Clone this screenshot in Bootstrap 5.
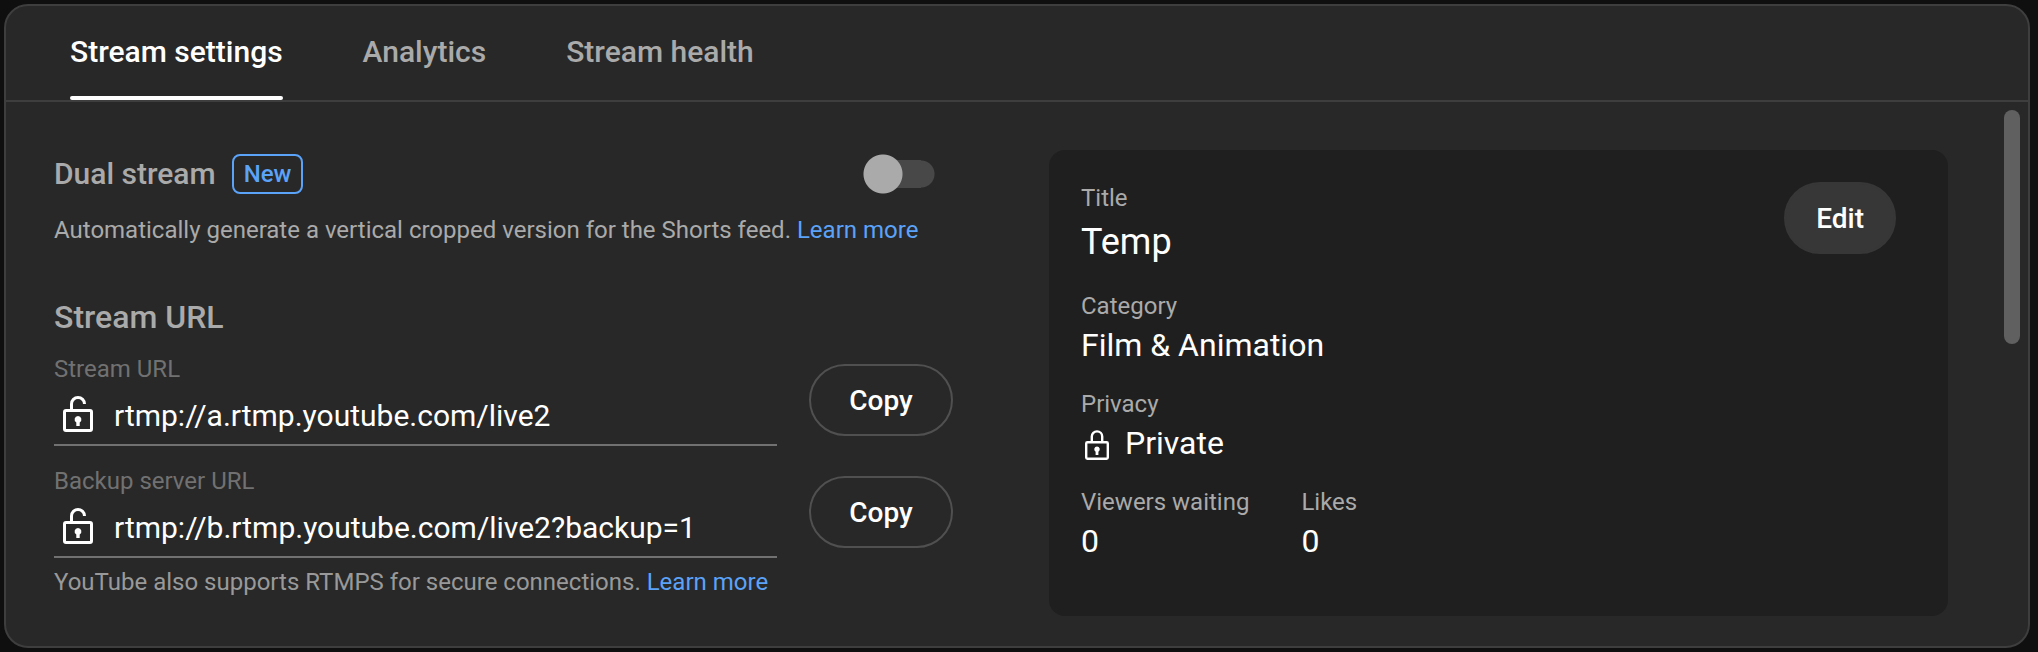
<!DOCTYPE html>
<html lang="en" data-bs-theme="dark">
<head>
<meta charset="utf-8">
<meta name="viewport" content="width=device-width, initial-scale=1">
<title>Stream settings</title>
<link rel="stylesheet" href="https://cdn.jsdelivr.net/npm/bootstrap@5.3.0/dist/css/bootstrap.min.css">
<style>
  :root {
    --ink: #fff;
    --muted: #aaa;
    --accent: #5ba3f8;
    --line: #3e3e3e;
  }
  body {
    background: #0f0f0f;
    color: var(--ink);
    font-family: Roboto, "Liberation Sans", sans-serif;
    font-size: 24px;
    line-height: 32px;
  }
  a { color: var(--accent); text-decoration: none; }
  .panel { background: #282828; border: 2px solid var(--line); border-radius: 24px; }
  .tabs { border-bottom: 2px solid var(--line); padding: 0 64px; gap: 80px; }
  .tabs .nav-link {
    position: relative;
    padding: 26px 0 28px;
    color: var(--muted);
    font-size: 30px;
    line-height: 40px;
    font-weight: 500;
  }
  .tabs .nav-link.active { color: var(--ink); }
  .tabs .nav-link.active::after {
    content: "";
    position: absolute;
    inset: auto 0 0 0;
    height: 4px;
    border-radius: 2px;
    background: var(--ink);
  }
  .content-grid {
    display: grid;
    grid-template-columns: minmax(0, 1fr) minmax(0, 1fr);
    gap: 96px;
    padding: 48px 80px 30px 48px;
  }
  .muted { color: var(--muted); }
  .section-title { font-size: 32px; line-height: 40px; font-weight: 500; color: var(--muted); }
  .dual-title { font-size: 30px; line-height: 40px; font-weight: 500; color: var(--muted); }
  .new-tag {
    border: 2px solid var(--accent);
    border-radius: 8px;
    color: var(--accent);
    font-weight: 500;
    line-height: 36px;
    padding: 0 10px;
  }
  .toggle {
    appearance: none;
    width: 72px;
    height: 40px;
    margin: 0 18px 0 0;
    background:
      radial-gradient(circle at 20px 20px, #aaa 19px, transparent 20px),
      linear-gradient(#484848, #484848) 20px 50% / 38px 28px no-repeat,
      radial-gradient(circle at 58px 20px, #484848 13px, transparent 14px);
  }
  .dual-note { margin-top: 20px; margin-bottom: 51px; }
  .field-row { gap: 32px; }
  .field-row + .field-row { margin-top: 19px; }
  .field-label { color: #717171; display: block; }
  .field-box { border-bottom: 2px solid #717171; gap: 12px; height: 61px; padding-top: 2px; }
  .field-box input {
    background: none;
    border: 0;
    outline: 0;
    color: var(--ink);
    padding: 1px 0 0;
    font-size: 30px;
    line-height: 40px;
    min-width: 0;
  }
  .pill {
    font-size: 28px;
    line-height: 36px;
    font-weight: 500;
    color: var(--ink);
    border: 2px solid #505050;
    border-radius: 36px;
    padding: 17px 30px 15px;
  }
  .pill-copy { min-width: 144px; margin-bottom: 10px; }
  .pill-edit { background: #373737; border-color: #373737; margin-right: 20px; }
  .pill:hover { background: #454545; color: var(--ink); border-color: #505050; }
  .helper { margin-top: 8px; color: #999; }
  .details { background: #1f1f1f; border-radius: 16px; padding: 32px; }
  .details dl, .details dd { margin: 0; }
  .details dt { color: var(--muted); font-weight: 400; }
  .details dd { font-size: 32px; line-height: 46px; }
  .details .stream-name { font-size: 36px; line-height: 56px; }
  .detail-stack { gap: 20px; }
  .privacy-value { gap: 12px; }
  .stats { gap: 52px; }
  .scroll-thumb {
    position: absolute;
    top: 8px;
    right: 8px;
    width: 16px;
    height: 234px;
    border-radius: 8px;
    background: #606060;
  }
</style>
</head>
<body>
<main class="d-flex flex-column min-vh-100 p-1 pe-2">
  <div class="panel d-flex flex-column flex-grow-1 overflow-hidden">
    <nav class="tabs nav" aria-label="Stream sections">
      <a class="nav-link active" aria-current="page" href="#settings">Stream settings</a>
      <a class="nav-link" href="#analytics">Analytics</a>
      <a class="nav-link" href="#health">Stream health</a>
    </nav>

    <div class="position-relative flex-grow-1 d-flex" id="settings">
      <div class="content-grid flex-grow-1">
        <section class="pt-1">
          <div class="d-flex align-items-center">
            <label class="dual-title me-3" for="dual">Dual stream</label>
            <span class="new-tag">New</span>
            <input class="toggle ms-auto" type="checkbox" role="switch" id="dual">
          </div>
          <p class="dual-note muted">Automatically generate a vertical cropped version for the Shorts feed. <a href="#dual-help">Learn more</a></p>

          <h2 class="section-title mb-3">Stream URL</h2>
          <div class="field-row d-flex align-items-end">
            <div class="flex-grow-1">
              <label class="field-label" for="url">Stream URL</label>
              <div class="field-box d-flex align-items-center">
                <svg class="flex-shrink-0" width="48" height="48" viewBox="0 1 48 48" fill="none" stroke="#fff" stroke-width="3" aria-hidden="true">
                  <rect x="10.500" y="19.500" width="27" height="20" rx="1.500"/>
                  <path d="M17.500 19V13a6.500 6.500 0 0 1 13 0"/>
                  <path d="M24 25a3.500 3.500 0 0 1 1.700 6.500V35h-3.400v-3.500A3.500 3.500 0 0 1 24 25z" fill="#fff" stroke="none"/>
                </svg>
                <input class="flex-grow-1" type="text" id="url" value="rtmp://a.rtmp.youtube.com/live2" readonly>
              </div>
            </div>
            <button class="btn pill pill-copy" type="button">Copy</button>
          </div>
          <div class="field-row d-flex align-items-end">
            <div class="flex-grow-1">
              <label class="field-label" for="backup">Backup server URL</label>
              <div class="field-box d-flex align-items-center">
                <svg class="flex-shrink-0" width="48" height="48" viewBox="0 1 48 48" fill="none" stroke="#fff" stroke-width="3" aria-hidden="true">
                  <rect x="10.500" y="19.500" width="27" height="20" rx="1.500"/>
                  <path d="M17.500 19V13a6.500 6.500 0 0 1 13 0"/>
                  <path d="M24 25a3.500 3.500 0 0 1 1.700 6.500V35h-3.400v-3.500A3.500 3.500 0 0 1 24 25z" fill="#fff" stroke="none"/>
                </svg>
                <input class="flex-grow-1" type="text" id="backup" value="rtmp://b.rtmp.youtube.com/live2?backup=1" readonly>
              </div>
            </div>
            <button class="btn pill pill-copy" type="button">Copy</button>
          </div>
          <p class="helper mb-0">YouTube also supports RTMPS for secure connections. <a href="#rtmps-help">Learn more</a></p>
        </section>

        <section class="details d-flex align-items-start justify-content-between" aria-label="Stream details">
          <div class="detail-stack d-flex flex-column">
            <dl><dt>Title</dt><dd class="stream-name">Temp</dd></dl>
            <dl><dt>Category</dt><dd>Film &amp; Animation</dd></dl>
            <dl>
              <dt>Privacy</dt>
              <dd class="privacy-value d-flex align-items-center">
                <svg width="32" height="36" viewBox="0 -4 32 36" fill="none" stroke="#fff" stroke-width="2.400" aria-hidden="true">
                  <rect x="5.200" y="13.200" width="21.600" height="16.600" rx="1.200"/>
                  <path d="M10.800 13V7.600a5.200 5.200 0 0 1 10.400 0V13"/>
                  <path d="M16 17.500a2.800 2.800 0 0 1 1.400 5.200V26h-2.800v-3.300A2.800 2.800 0 0 1 16 17.500z" fill="#fff" stroke="none"/>
                </svg>
                Private
              </dd>
            </dl>
            <div class="stats d-flex">
              <dl><dt>Viewers waiting</dt><dd>0</dd></dl>
              <dl><dt>Likes</dt><dd>0</dd></dl>
            </div>
          </div>
          <button class="btn pill pill-edit" type="button">Edit</button>
        </section>
      </div>
      <div class="scroll-thumb" aria-hidden="true"></div>
    </div>
  </div>
</main>
<script src="https://cdn.jsdelivr.net/npm/bootstrap@5.3.0/dist/js/bootstrap.bundle.min.js"></script>
</body>
</html>
